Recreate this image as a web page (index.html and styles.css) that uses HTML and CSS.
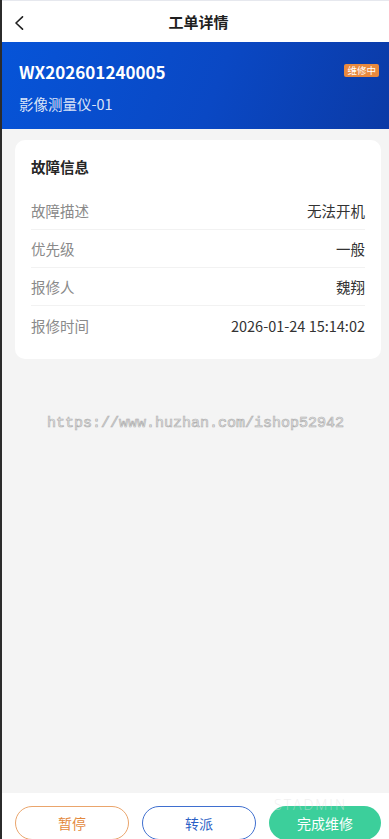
FILE: index.html
```html
<!DOCTYPE html>
<html lang="zh-CN">
<head>
  <meta charset="UTF-8" />
  <meta name="viewport" content="width=device-width, initial-scale=1.0" />
  <title>工单详情</title>
  <link rel="stylesheet" href="styles.css">
</head>
<body>
  <div id="app">
    <!-- Nav bar -->
    <header class="nav-bar">
      <span class="nav-back">
        <svg width="10" height="14" viewBox="0 0 10 14"><path d="M8.5 0.8 L2 7 L8.5 13.2" fill="none" stroke="#222" stroke-width="1.6" stroke-linecap="round" stroke-linejoin="round"/></svg>
      </span>
      <h1 class="nav-title">工单详情</h1>
    </header>

    <!-- Order banner -->
    <section class="order-banner">
      <div class="order-top">
        <h2 class="order-no">WX202601240005</h2>
        <span class="status-tag">维修中</span>
      </div>
      <p class="order-device">影像测量仪-01</p>
    </section>

    <main class="content">
      <div class="info-card">
        <h3 class="card-title">故障信息</h3>
        <div class="info-row">
          <span class="info-label">故障描述</span>
          <span class="info-value">无法开机</span>
        </div>
        <div class="info-row">
          <span class="info-label">优先级</span>
          <span class="info-value">一般</span>
        </div>
        <div class="info-row">
          <span class="info-label">报修人</span>
          <span class="info-value">魏翔</span>
        </div>
        <div class="info-row">
          <span class="info-label">报修时间</span>
          <span class="info-value">2026-01-24 15:14:02</span>
        </div>
      </div>
      <div class="url-mark">https://www.huzhan.com/ishop52942</div>
    </main>

    <!-- Action bar -->
    <footer class="action-bar">
      <button class="btn btn-pause">暂停</button>
      <button class="btn btn-transfer">转派</button>
      <button class="btn btn-finish">完成维修</button>
      <span class="brand-mark">STADMIN</span>
    </footer>
  </div>
</body>
</html>
```

FILE: styles.css
```css
body {
  margin: 0;
  font-family: "Noto Sans CJK SC", "Noto Sans", sans-serif;
  background: #f4f4f4;
  color: #333;
  overflow: hidden;
}

#app {
  height: calc(100vh + 3px);
  display: flex;
  flex-direction: column;
  border-left: 2px solid #2b2b2b;
}

.nav-bar {
  height: 42px;
  background: #fff;
  border-top: 1px solid #e6e8ee;
  box-sizing: border-box;
  display: flex;
  align-items: center;
  justify-content: center;
  position: relative;
}

.nav-back {
  position: absolute;
  left: 12px;
  top: 15px;
  display: flex;
}

.nav-title {
  margin: 0 0 0 6px;
  font-size: 15px;
  font-weight: 700;
  color: #1f1f1f;
}

.order-banner {
  height: 87px;
  box-sizing: border-box;
  padding: 18px 10px 0 17px;
  background: linear-gradient(110deg, #0654d8 0%, #0a48c4 55%, #0b3aa6 100%);
  color: #fff;
}

.order-top {
  display: flex;
  justify-content: space-between;
  align-items: flex-start;
}

.order-no {
  margin: 0;
  font-size: 17px;
  line-height: 24px;
  font-weight: 700;
}

.status-tag {
  margin-top: 4px;
  background: #e9893e;
  color: #fff;
  font-size: 9.5px;
  line-height: 13px;
  padding: 0 3px;
  border-radius: 2px;
}

.order-device {
  margin: 9px 0 0;
  font-size: 14.5px;
  line-height: 21px;
  color: rgba(255, 255, 255, 0.86);
}

.content {
  flex: 1;
  padding: 11px 8px 0 13px;
  position: relative;
}

.info-card {
  background: #fff;
  border-radius: 10px;
  padding: 16px 16px 15px;
}

.card-title {
  margin: 0 0 14px;
  font-size: 14.5px;
  line-height: 22px;
  font-weight: 700;
  color: #262626;
}

.info-row {
  height: 38px;
  display: flex;
  justify-content: space-between;
  align-items: center;
  font-size: 14.5px;
  border-bottom: 1px solid #f2f2f2;
  box-sizing: border-box;
}

.info-row:last-child {
  border-bottom: none;
}

.info-label {
  color: #8a8a8a;
}

.info-value {
  color: #333;
}

.url-mark {
  position: absolute;
  left: 45px;
  top: 286px;
  font-family: "Liberation Mono", monospace;
  font-size: 15px;
  color: #f4f4f4;
  -webkit-text-stroke: 0.7px #b0b0b0;
}

.action-bar {
  background: #fff;
  padding: 13px 8px 2px 13px;
  display: flex;
  gap: 13px;
  position: relative;
}

.btn {
  flex: 1;
  height: 34px;
  border-radius: 17px;
  font-family: "Noto Sans CJK SC", sans-serif;
  font-size: 14px;
  background: #fff;
  cursor: pointer;
}

.btn-pause {
  border: 1px solid #eaa56c;
  color: #e3883c;
}

.btn-transfer {
  border: 1px solid #3f6fcf;
  color: #2c5fc6;
}

.btn-finish {
  border: none;
  background: #3ccf9b;
  color: #fff;
}

.brand-mark {
  position: absolute;
  left: 272px;
  top: 4px;
  font-family: "Open Sans", sans-serif;
  font-weight: 300;
  font-size: 14px;
  line-height: 15px;
  letter-spacing: 2px;
  color: rgba(225, 225, 225, 0.5);
}
```
